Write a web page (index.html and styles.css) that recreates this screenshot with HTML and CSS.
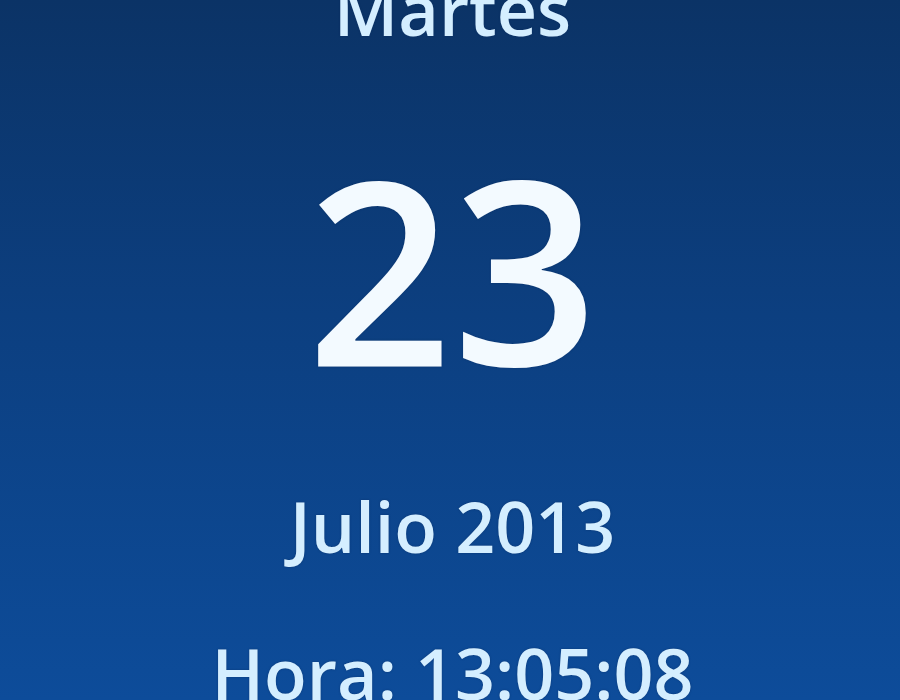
FILE: index.html
```html
<!DOCTYPE html>
<html lang="es">
<head>
<meta charset="utf-8">
<link rel="stylesheet" href="styles.css">
</head>
<body>
<div class="gadget">
  <div class="day">Martes</div>
  <div class="date">23</div>
  <div class="month">Julio 2013</div>
  <div class="time">Hora: 13:05:08</div>
</div>
</body>
</html>
```
FILE: styles.css
```css
html, body {
  margin: 0;
  padding: 0;
}
body {
  width: 900px;
  height: 700px;
  overflow: hidden;
  background: linear-gradient(to bottom, #0b3366 0%, #0c3f80 45%, #0d4c9a 100%);
  font-family: "Open Sans", "DejaVu Sans", sans-serif;
}
.gadget {
  display: flex;
  flex-direction: column;
  align-items: center;
  padding-left: 5px;
  color: #d4eeff;
  font-weight: 600;
  text-shadow: 0 0 2px rgba(10, 40, 90, 0.6);
}
.day {
  font-size: 70px;
  line-height: 72px;
  margin-top: -27px;
}
.date {
  font-size: 255px;
  line-height: 255px;
  margin-top: 95px;
  color: #f3faff;
}
.month {
  font-size: 70px;
  line-height: 72px;
  margin-top: 95px;
}
.time {
  font-size: 70px;
  line-height: 72px;
  margin-top: 75px;
  white-space: nowrap;
}
```
